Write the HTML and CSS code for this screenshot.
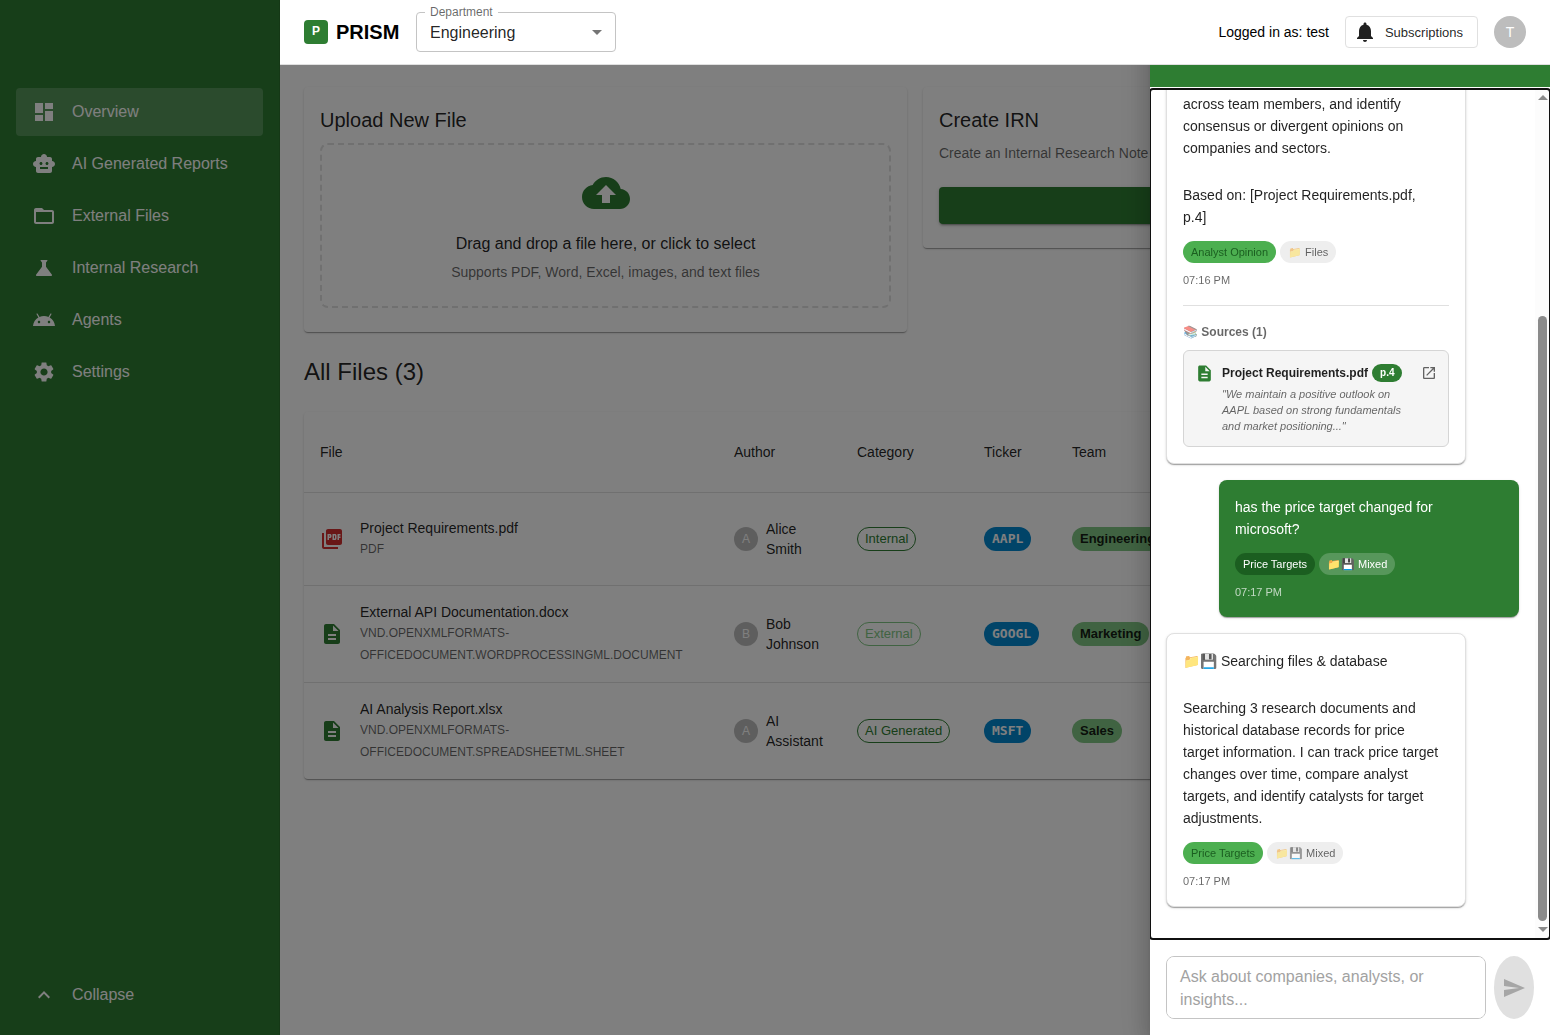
FILE: index.html
```html
<!DOCTYPE html>
<html lang="en">
<head>
<meta charset="utf-8">
<meta name="viewport" content="width=device-width, initial-scale=1">
<title>PRISM</title>
<link rel="stylesheet" href="styles.css">
</head>
<body>
<svg class="sprite" aria-hidden="true">
  <symbol id="i-dashboard" viewBox="0 0 24 24"><path d="M3 13h8V3H3v10zm0 8h8v-6H3v6zm10 0h8V11h-8v10zm0-18v6h8V3h-8z"/></symbol>
  <symbol id="i-robot" viewBox="0 0 24 24"><path d="M20 9V7c0-1.100-.9-2-2-2h-3c0-1.660-1.340-3-3-3S9 3.340 9 5H6c-1.100 0-2 .9-2 2v2c-1.660 0-3 1.340-3 3s1.340 3 3 3v4c0 1.100.9 2 2 2h12c1.100 0 2-.9 2-2v-4c1.660 0 3-1.340 3-3s-1.340-3-3-3zM7.500 11.500c0-.83.67-1.500 1.500-1.500s1.500.67 1.500 1.500S9.830 13 9 13s-1.500-.67-1.500-1.500zM16 17H8v-2h8v2zm-1-4c-.83 0-1.500-.67-1.500-1.500S14.170 10 15 10s1.500.67 1.500 1.500S15.830 13 15 13z"/></symbol>
  <symbol id="i-folder" viewBox="0 0 24 24"><path d="M20 6h-8l-2-2H4c-1.100 0-1.990.9-1.990 2L2 18c0 1.100.9 2 2 2h16c1.100 0 2-.9 2-2V8c0-1.100-.9-2-2-2zm0 12H4V8h16v10z"/></symbol>
  <symbol id="i-flask" viewBox="0 0 24 24"><path d="M19.800 18.400 14 10.670V6.500l1.350-1.690c.26-.33.03-.81-.39-.81H9.040c-.42 0-.65.48-.39.81L10 6.500v4.170L4.200 18.400c-.49.66-.02 1.600.8 1.600h14c.82 0 1.290-.94.8-1.600z"/></symbol>
  <symbol id="i-android" viewBox="0 0 24 24"><path d="M17.600 9.480l1.840-3.180c.16-.31.04-.69-.26-.85-.29-.15-.65-.06-.83.22l-1.880 3.240c-2.860-1.210-6.080-1.210-8.940 0L5.650 5.670c-.19-.29-.58-.38-.87-.2-.28.18-.37.54-.22.83L6.400 9.480C3.300 11.250 1.280 14.440 1 18h22c-.28-3.560-2.300-6.750-5.400-8.520zM7 15.250c-.69 0-1.250-.56-1.250-1.250s.56-1.250 1.250-1.250 1.250.56 1.250 1.250-.56 1.250-1.250 1.250zm10 0c-.69 0-1.250-.56-1.250-1.250s.56-1.250 1.250-1.250 1.250.56 1.250 1.250-.56 1.250-1.250 1.250z"/></symbol>
  <symbol id="i-gear" viewBox="0 0 24 24"><path d="M19.140 12.940c.04-.3.06-.61.06-.94 0-.32-.02-.64-.07-.94l2.030-1.580c.18-.14.23-.41.12-.61l-1.920-3.320c-.12-.22-.37-.29-.59-.22l-2.390.96c-.5-.38-1.030-.7-1.620-.94l-.36-2.540c-.04-.24-.24-.41-.48-.41h-3.840c-.24 0-.43.17-.47.41l-.36 2.540c-.59.24-1.130.57-1.620.94l-2.390-.96c-.22-.08-.47 0-.59.22L2.740 8.870c-.12.21-.08.47.12.61l2.030 1.580c-.05.3-.09.63-.09.94s.02.64.07.94l-2.030 1.580c-.18.14-.23.41-.12.61l1.920 3.320c.12.22.37.29.59.22l2.390-.96c.5.38 1.030.7 1.620.94l.36 2.540c.05.24.24.41.48.41h3.840c.24 0 .44-.17.47-.41l.36-2.540c.59-.24 1.130-.56 1.620-.94l2.390.96c.22.08.47 0 .59-.22l1.920-3.320c.12-.22.07-.47-.12-.61l-2.010-1.580zM12 15.600c-1.980 0-3.600-1.620-3.600-3.600s1.620-3.600 3.600-3.600 3.600 1.620 3.600 3.600-1.620 3.600-3.600 3.600z"/></symbol>
  <symbol id="i-up" viewBox="0 0 24 24"><path d="M12 8l-6 6 1.410 1.410L12 10.830l4.590 4.580L18 14z"/></symbol>
  <symbol id="i-bell" viewBox="0 0 24 24"><path d="M12 22c1.100 0 2-.9 2-2h-4c0 1.100.89 2 2 2zm6-6v-5c0-3.070-1.640-5.640-4.500-6.320V4c0-.83-.67-1.500-1.500-1.500s-1.500.67-1.500 1.500v.68C7.630 5.360 6 7.920 6 11v5l-2 2v1h16v-1l-2-2z"/></symbol>
  <symbol id="i-caret" viewBox="0 0 24 24"><path d="M7 10l5 5 5-5z"/></symbol>
  <symbol id="i-cloud" viewBox="0 0 24 24"><path d="M19.350 10.040C18.670 6.590 15.640 4 12 4 9.110 4 6.600 5.640 5.350 8.040 2.340 8.360 0 10.910 0 14c0 3.310 2.690 6 6 6h13c2.760 0 5-2.240 5-5 0-2.640-2.050-4.780-4.650-4.960zM14 13v4h-4v-4H7l5-5 5 5h-3z"/></symbol>
  <symbol id="i-pdf" viewBox="0 0 24 24"><path d="M20 2H8c-1.100 0-2 .9-2 2v12c0 1.100.9 2 2 2h12c1.100 0 2-.9 2-2V4c0-1.100-.9-2-2-2zm-8.500 7.500c0 .83-.67 1.500-1.500 1.500H9v2H7.500V7H10c.83 0 1.500.67 1.500 1.500v1zm5 2c0 .83-.67 1.500-1.500 1.500h-2.500V7H15c.83 0 1.500.67 1.500 1.500v3zm4-3H19v1h1.500V11H19v2h-1.500V7h3v1.500zM9 9.500h1v-1H9v1zM4 6H2v14c0 1.100.9 2 2 2h14v-2H4V6zm10 5.500h1v-3h-1v3z"/></symbol>
  <symbol id="i-doc" viewBox="0 0 24 24"><path d="M14 2H6c-1.100 0-1.990.9-1.990 2L4 20c0 1.100.89 2 1.990 2H18c1.100 0 2-.9 2-2V8l-6-6zm2 16H8v-2h8v2zm0-4H8v-2h8v2zm-3-5V3.500L18.500 9H13z"/></symbol>
  <symbol id="i-open" viewBox="0 0 24 24"><path d="M19 19H5V5h7V3H5c-1.110 0-2 .9-2 2v14c0 1.100.89 2 2 2h14c1.100 0 2-.9 2-2v-7h-2v7zM14 3v2h3.590l-9.830 9.830 1.410 1.410L19 6.410V10h2V3h-7z"/></symbol>
  <symbol id="i-send" viewBox="0 0 24 24"><path d="M2.010 21L23 12 2.010 3 2 10l15 2-15 2z"/></symbol>
</svg>

<div class="shell">
  <nav class="sidebar" aria-label="Main">
    <div class="nav-list">
      <a class="nav-item nav-item-active" href="#overview"><svg class="icon"><use href="#i-dashboard"/></svg>Overview</a>
      <a class="nav-item" href="#reports"><svg class="icon"><use href="#i-robot"/></svg>AI Generated Reports</a>
      <a class="nav-item" href="#external"><svg class="icon"><use href="#i-folder"/></svg>External Files</a>
      <a class="nav-item" href="#internal"><svg class="icon"><use href="#i-flask"/></svg>Internal Research</a>
      <a class="nav-item" href="#agents"><svg class="icon"><use href="#i-android"/></svg>Agents</a>
      <a class="nav-item" href="#settings"><svg class="icon"><use href="#i-gear"/></svg>Settings</a>
    </div>
    <button class="nav-item" type="button"><svg class="icon"><use href="#i-up"/></svg>Collapse</button>
  </nav>

  <header class="topbar">
    <div class="brand"><span class="brand-mark">P</span><span class="brand-name">PRISM</span></div>
    <div class="field">
      <label class="field-label" for="department">Department</label>
      <select class="field-select" id="department"><option>Engineering</option></select>
      <svg class="icon field-caret"><use href="#i-caret"/></svg>
    </div>
    <div class="account">
      <span class="account-name">Logged in as: test</span>
      <button class="subs" type="button"><svg class="icon"><use href="#i-bell"/></svg>Subscriptions</button>
      <span class="avatar avatar-large">T</span>
    </div>
  </header>

  <main class="main">
    <div class="cards">
      <section class="card">
        <h2 class="card-title">Upload New File</h2>
        <div class="dropzone">
          <svg class="icon dropzone-icon"><use href="#i-cloud"/></svg>
          <p class="dropzone-title">Drag and drop a file here, or click to select</p>
          <p class="muted">Supports PDF, Word, Excel, images, and text files</p>
        </div>
      </section>
      <section class="card">
        <h2 class="card-title">Create IRN</h2>
        <p class="muted">Create an Internal Research Note</p>
        <button class="primary" type="button" aria-label="Create IRN"></button>
      </section>
    </div>

    <h1 class="heading">All Files (3)</h1>

    <table class="files">
      <colgroup><col class="col-file"><col class="col-author"><col class="col-category"><col class="col-ticker"><col></colgroup>
      <thead>
        <tr><th>File</th><th>Author</th><th>Category</th><th>Ticker</th><th>Team</th></tr>
      </thead>
      <tbody>
        <tr>
          <td><div class="file"><svg class="icon icon-red"><use href="#i-pdf"/></svg><div><div class="file-name">Project Requirements.pdf</div><div class="file-type">PDF</div></div></div></td>
          <td><div class="author"><span class="avatar">A</span><span>Alice Smith</span></div></td>
          <td><span class="chip chip-outline">Internal</span></td>
          <td><span class="chip chip-ticker">AAPL</span></td>
          <td><span class="chip chip-team">Engineering</span></td>
        </tr>
        <tr>
          <td><div class="file"><svg class="icon icon-green"><use href="#i-doc"/></svg><div><div class="file-name">External API Documentation.docx</div><div class="file-type">VND.OPENXMLFORMATS-<wbr>OFFICEDOCUMENT.WORDPROCESSINGML.DOCUMENT</div></div></div></td>
          <td><div class="author"><span class="avatar">B</span><span>Bob Johnson</span></div></td>
          <td><span class="chip chip-outline chip-pale">External</span></td>
          <td><span class="chip chip-ticker">GOOGL</span></td>
          <td><span class="chip chip-team">Marketing</span></td>
        </tr>
        <tr>
          <td><div class="file"><svg class="icon icon-green"><use href="#i-doc"/></svg><div><div class="file-name">AI Analysis Report.xlsx</div><div class="file-type">VND.OPENXMLFORMATS-<wbr>OFFICEDOCUMENT.SPREADSHEETML.SHEET</div></div></div></td>
          <td><div class="author"><span class="avatar">A</span><span>AI Assistant</span></div></td>
          <td><span class="chip chip-outline">AI Generated</span></td>
          <td><span class="chip chip-ticker">MSFT</span></td>
          <td><span class="chip chip-team">Sales</span></td>
        </tr>
      </tbody>
    </table>
  </main>
</div>

<div class="backdrop"></div>

<aside class="drawer" aria-label="Research assistant">
  <div class="drawer-head"></div>
  <div class="drawer-body">
    <div class="log">
      <div class="log-scroll" tabindex="0">
        <div class="log-inner">
          <article class="bubble">
            <p>analyst views, compare perspectives across team members, and identify consensus or divergent opinions on companies and sectors.</p>
            <p>Based on: [Project Requirements.pdf, p.4]</p>
            <div class="tags"><span class="tag tag-green">Analyst Opinion</span><span class="tag">📁 Files</span></div>
            <time class="time">07:16 PM</time>
            <div class="sources">
              <h3 class="sources-title">📚 Sources (1)</h3>
              <div class="source">
                <svg class="icon source-icon icon-green"><use href="#i-doc"/></svg>
                <div class="source-body">
                  <div class="source-head"><span class="source-name">Project Requirements.pdf</span><span class="page">p.4</span></div>
                  <div class="quote">"We maintain a positive outlook on AAPL based on strong fundamentals and market positioning..."</div>
                </div>
                <button class="open" type="button" aria-label="Open source"><svg class="icon"><use href="#i-open"/></svg></button>
              </div>
            </div>
          </article>
          <article class="bubble bubble-user">
            <p>has the price target changed for microsoft?</p>
            <div class="tags"><span class="tag tag-dark">Price Targets</span><span class="tag tag-glass">📁💾 Mixed</span></div>
            <time class="time">07:17 PM</time>
          </article>
          <article class="bubble">
            <p>📁💾 Searching files &amp; database</p>
            <p>Searching 3 research documents and historical database records for price target information. I can track price target changes over time, compare analyst targets, and identify catalysts for target adjustments.</p>
            <div class="tags"><span class="tag tag-green">Price Targets</span><span class="tag">📁💾 Mixed</span></div>
            <time class="time">07:17 PM</time>
          </article>
        </div>
      </div>
      <div class="scrollbar" aria-hidden="true">
        <span class="scroll-arrow scroll-arrow-up"></span>
        <span class="scroll-thumb"></span>
        <span class="scroll-arrow scroll-arrow-down"></span>
      </div>
    </div>
    <form class="composer">
      <textarea class="composer-input" aria-label="Message" placeholder="Ask about companies, analysts, or insights..."></textarea>
      <button class="send" type="button" disabled aria-label="Send"><svg class="icon"><use href="#i-send"/></svg></button>
    </form>
  </div>
</aside>
</body>
</html>
```
FILE: styles.css
```css
:root {
  --green: #2e7d32;
  --line: #e0e0e0;
  --text: rgba(0, 0, 0, 0.87);
  --muted: rgba(0, 0, 0, 0.6);
  --paper-shadow: 0 2px 1px -1px rgba(0, 0, 0, 0.2), 0 1px 1px rgba(0, 0, 0, 0.14), 0 1px 3px rgba(0, 0, 0, 0.12);
}

* { box-sizing: border-box; }

body {
  margin: 0;
  background: #fff;
  color: var(--text);
  font-family: "Liberation Sans", Arial, sans-serif;
  font-size: 14px;
  line-height: 20px;
}

h1, h2, h3, p { margin: 0; font-weight: 400; }
button, select, textarea { font-family: inherit; color: inherit; }
button { cursor: pointer; }

.sprite { display: none; }
.icon { width: 24px; height: 24px; flex: none; fill: currentColor; display: block; }
.icon-red { color: #d32f2f; }
.icon-green { color: var(--green); }
.muted { color: var(--muted); }

.shell {
  display: grid;
  grid-template-columns: 280px minmax(0, 1fr);
  grid-template-rows: auto 1fr;
  min-height: 100vh;
}

/* Sidebar */
.sidebar {
  grid-row: 1 / 3;
  display: flex;
  flex-direction: column;
  justify-content: space-between;
  padding: 88px 16px 16px;
  border-right: 1px solid #2a702d;
  background: var(--green);
  color: #fff;
}
.nav-list { display: flex; flex-direction: column; gap: 4px; }
.nav-item {
  display: flex;
  align-items: center;
  gap: 16px;
  width: 100%;
  height: 48px;
  padding: 0 16px;
  border: 0;
  border-radius: 4px;
  background: none;
  color: #fff;
  font-size: 16px;
  text-decoration: none;
}
.nav-item-active { background: rgba(255, 255, 255, 0.2); }

/* Top bar */
.topbar {
  position: sticky;
  top: 0;
  z-index: 30;
  display: flex;
  align-items: center;
  gap: 16px;
  height: 65px;
  padding: 0 24px;
  border-bottom: 1px solid var(--line);
  background: #fff;
}
.brand { display: flex; align-items: center; gap: 8px; color: #000; }
.brand-mark {
  display: flex;
  justify-content: center;
  width: 24px;
  height: 24px;
  border-radius: 4px;
  background: var(--green);
  color: #fff;
  font-size: 12px;
  font-weight: 700;
  line-height: 22px;
}
.brand-name { min-width: 64px; font-size: 20px; font-weight: 700; }
.field { position: relative; width: 200px; }
.field-label {
  position: absolute;
  top: -10px;
  left: 9px;
  padding: 0 5px;
  background: #fff;
  color: var(--muted);
  font-size: 12px;
}
.field-select {
  display: block;
  width: 100%;
  height: 40px;
  padding: 0 32px 0 13px;
  border: 1px solid #c4c4c4;
  border-radius: 4px;
  background: #fff;
  font-size: 16px;
  appearance: none;
}
.field-caret { position: absolute; top: 8px; right: 7px; color: rgba(0, 0, 0, 0.54); pointer-events: none; }
.account { display: flex; align-items: center; gap: 16px; margin-left: auto; }
.account-name { color: #000; }
.subs {
  display: flex;
  align-items: center;
  gap: 8px;
  height: 32px;
  padding: 0 14px 0 7px;
  border: 1px solid var(--line);
  border-radius: 4px;
  background: #fff;
  font-size: 13px;
}
.avatar {
  display: flex;
  align-items: center;
  justify-content: center;
  flex: none;
  width: 24px;
  height: 24px;
  border-radius: 50%;
  background: #bdbdbd;
  color: #fff;
  font-size: 12px;
}
.avatar-large { width: 32px; height: 32px; font-size: 14px; }

/* Page content */
.main { padding: 22px 24px; }
.cards {
  display: grid;
  grid-template-columns: 1fr 1fr;
  align-items: start;
  gap: 16px;
}
.card {
  padding: 16px 16px 24px;
  border-radius: 4px;
  background: #fff;
  box-shadow: var(--paper-shadow);
}
.card-title { padding-top: 2px; margin-bottom: 8px; font-size: 20px; line-height: 30px; }
.dropzone {
  display: flex;
  flex-direction: column;
  align-items: center;
  padding: 24px;
  border: 2px dashed var(--line);
  border-radius: 8px;
}
.dropzone-icon { width: 48px; height: 48px; margin-bottom: 15px; color: var(--green); }
.dropzone-title { margin-bottom: 6px; font-size: 16px; line-height: 24px; }
.primary {
  display: block;
  width: 100%;
  height: 37px;
  margin-top: 24px;
  border: 0;
  border-radius: 4px;
  background: var(--green);
  color: #fff;
  font-size: 14px;
  box-shadow: 0 3px 1px -2px rgba(0, 0, 0, 0.2), 0 2px 2px rgba(0, 0, 0, 0.14), 0 1px 5px rgba(0, 0, 0, 0.12);
}
.heading { margin: 24px 0; font-size: 24px; line-height: 32px; }

.files {
  width: 100%;
  table-layout: fixed;
  border-collapse: separate;
  border-spacing: 0;
  border-radius: 4px;
  box-shadow: var(--paper-shadow);
}
.col-file { width: 414px; }
.col-author { width: 123px; }
.col-category { width: 127px; }
.col-ticker { width: 88px; }
.files th, .files td { padding: 0 16px; border-bottom: 1px solid var(--line); text-align: left; }
.files th { height: 81px; font-weight: 400; }
.files td { height: 93px; padding: 14px 16px; }
.files tr:last-child td { border-bottom: 0; }
.files td:first-child { padding: 16px; }
.file { display: flex; align-items: center; gap: 16px; }
.file-type { color: var(--muted); font-size: 12px; line-height: 22px; }
.author { display: flex; align-items: center; gap: 8px; }
.chip {
  display: inline-flex;
  align-items: center;
  height: 24px;
  padding: 0 8px;
  border-radius: 12px;
  font-size: 13px;
  vertical-align: middle;
}
.chip-outline { padding: 0 7px; border: 1px solid var(--green); color: var(--green); }
.chip-pale { border-color: #81c784; color: #81c784; }
.chip-ticker {
  background: #0288d1;
  color: #fff;
  font-family: "DejaVu Sans Mono", monospace;
  font-weight: 700;
}
.chip-team { background: #81c784; font-weight: 700; }

/* Chat drawer */
.backdrop { position: fixed; inset: 0; z-index: 10; background: rgba(0, 0, 0, 0.5); }
.drawer {
  position: fixed;
  top: 0;
  right: 0;
  bottom: 0;
  z-index: 20;
  display: flex;
  flex-direction: column;
  width: 400px;
  max-width: 100%;
  background: #fff;
  box-shadow: 0 8px 10px -5px rgba(0, 0, 0, 0.2), 0 16px 24px 2px rgba(0, 0, 0, 0.14), 0 6px 30px 5px rgba(0, 0, 0, 0.12);
}
.drawer-head { flex: none; height: 87px; background: var(--green); }
.drawer-body {
  display: flex;
  flex: 1;
  flex-direction: column;
  min-height: 0;
  padding-top: 2px;
  overflow: hidden;
}
.log {
  position: relative;
  z-index: 1;
  display: flex;
  flex: 1;
  min-height: 0;
  outline: 2px solid #101010;
  outline-offset: -1px;
  border-radius: 3px;
}
.log-scroll {
  display: flex;
  flex: 1;
  flex-direction: column-reverse;
  min-width: 0;
  overflow-y: auto;
  outline: 0;
  scrollbar-width: none;
}
.log-inner {
  display: flex;
  flex-direction: column;
  align-items: flex-start;
  gap: 16px;
  padding: 16px 16px 32px;
}
.scrollbar {
  display: flex;
  flex: none;
  flex-direction: column;
  align-items: center;
  gap: 6px;
  width: 15px;
  padding: 6px 0 7px;
  background: #fcfcfc;
}
.scroll-thumb { width: 9px; height: 605px; max-height: 80%; margin-top: auto; border-radius: 5px; background: #8b8b8b; }
.scroll-arrow { border: 5px solid transparent; }
.scroll-arrow-up { border-top: 0; border-bottom-color: #8b8b8b; }
.scroll-arrow-down { border-bottom: 0; border-top-color: #8b8b8b; }
.bubble {
  width: 85%;
  padding: 16px;
  border: 1px solid var(--line);
  border-radius: 8px;
  background: #fff;
  line-height: 22px;
  box-shadow: var(--paper-shadow);
}
.bubble p { padding-right: 8px; }
.bubble p + p { margin-top: 25px; }
.bubble-user { align-self: flex-end; border: 0; background: var(--green); color: #fff; }
.tags { display: flex; gap: 4px; margin: 13px 0 8px; }
.tag {
  height: 22px;
  padding: 0 8px;
  border-radius: 11px;
  background: #eee;
  color: var(--muted);
  font-size: 11px;
  line-height: 22px;
}
.tag-green { background: #4caf50; color: #1b5e20; }
.tag-dark { background: #1b5e20; color: #fff; }
.tag-glass { background: rgba(255, 255, 255, 0.2); color: #fff; }
.time { display: block; color: var(--muted); font-size: 11px; line-height: 18px; }
.bubble-user .time { color: rgba(255, 255, 255, 0.7); }
.sources { margin-top: 16px; padding-top: 16px; border-top: 1px solid var(--line); }
.sources-title { margin-bottom: 8px; color: var(--muted); font-size: 12px; font-weight: 700; line-height: 20px; }
.source {
  display: flex;
  align-items: flex-start;
  padding: 12px 11px;
  border: 1px solid #d5d5d5;
  border-radius: 6px;
  background: #f5f5f5;
}
.source-icon { width: 19px; height: 19px; margin: 1px 8px 0 0; }
.source-body { flex: 1; min-width: 0; }
.source-head { display: flex; align-items: center; gap: 4px; height: 19px; margin-bottom: 4px; }
.source-name { font-size: 12px; font-weight: 700; }
.page {
  padding: 0 8px;
  border-radius: 9px;
  background: var(--green);
  color: #fff;
  font-size: 10px;
  font-weight: 700;
  line-height: 18px;
}
.quote { color: var(--muted); font-size: 11px; font-style: italic; line-height: 16px; }
.open { margin: 2px 0 0 8px; padding: 0; border: 0; background: none; color: var(--muted); }
.open .icon { width: 16px; height: 16px; }
.composer {
  display: flex;
  flex: none;
  gap: 8px;
  padding: 16px;
  border-top: 1px solid var(--line);
}
.composer-input {
  flex: 1;
  min-width: 0;
  height: 63px;
  padding: 8px 13px;
  border: 1px solid #c4c4c4;
  border-radius: 8px;
  background: #fff;
  font-size: 16px;
  line-height: 23px;
  resize: none;
}
.composer-input::placeholder { color: #a2a2a2; }
.send {
  display: flex;
  align-items: center;
  justify-content: center;
  width: 40px;
  padding: 0;
  border: 0;
  border-radius: 50%;
  background: var(--line);
  color: rgba(0, 0, 0, 0.26);
}
```
